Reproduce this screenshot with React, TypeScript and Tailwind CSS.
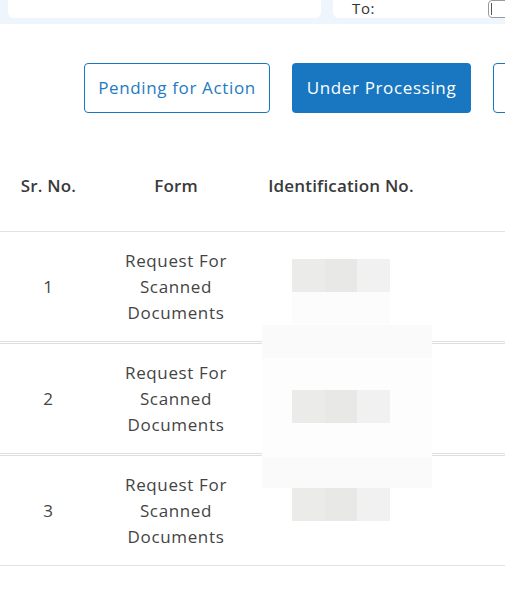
const rows = [
  { n: 1, offset: "pt-[27px]", under: true },
  { n: 2, offset: "pt-[46px]", under: false },
  { n: 3, offset: "pt-[32px]", under: false },
];

function BlurCell({ under, offset }: { under: boolean; offset: string }) {
  return (
    <div className={`relative z-10 flex flex-col items-center pl-[10px] ${offset}`}>
      <div className="flex h-[33px] w-[98px]">
        <div className="flex-1 bg-[#ebebea]" />
        <div className="flex-1 bg-[#e8e8e7]" />
        <div className="flex-1 bg-[#f1f1f1]" />
      </div>
      {under ? <div className="h-[32px] w-[98px] bg-[#fcfcfc]" /> : null}
    </div>
  );
}

export default function App() {
  return (
    <div className="relative h-[592px] w-[505px] overflow-hidden bg-white font-['Open_Sans',sans-serif] tracking-[0.04em]">
      <div className="flex h-[24px] gap-3 bg-[#eff5fc] px-2">
        <div className="h-[18px] w-[313px] rounded-b-md bg-white" />
        <div className="relative flex h-[18px] flex-1 items-end rounded-bl-md bg-white pl-[19px]">
          <span className="mb-[3px] text-[15px] leading-[14px] text-[#333]">To:</span>
          <div className="absolute right-[-12px] top-0 h-[18px] w-[21px] rounded-sm border border-[#9a9a9a] bg-white pl-[2px] pt-[2px]">
            <div className="h-[12px] w-[1px] bg-[#555]" />
          </div>
        </div>
      </div>

      <div className="mt-[39px] flex gap-[22px] pl-[84px]">
        <button className="h-[50px] w-[186px] shrink-0 rounded border border-[#1877c0] bg-white text-[17px] text-[#1f7bc2]">
          Pending for Action
        </button>
        <button className="h-[50px] w-[179px] shrink-0 rounded bg-[#1877c0] text-[17px] font-medium text-white">
          Under Processing
        </button>
        <button className="h-[50px] w-[120px] shrink-0 rounded border border-[#1877c0] bg-white" />
      </div>

      <div className="mt-[27px] w-[640px]">
        <div className="flex h-[92px] items-center border-b border-[#e2e2e2] text-[17px] font-semibold tracking-[0.01em] text-[#3a3a3a]">
          <div className="w-[97px] text-center">Sr. No.</div>
          <div className="w-[158px] text-center">Form</div>
          <div className="w-[172px] text-center">Identification No.</div>
        </div>
        {rows.map((row, i) => (
          <div
            key={row.n}
            className={
              i < rows.length - 1
                ? "flex h-[112px] border-b-[3px] border-double border-[#dedede] text-[17px] text-[#444]"
                : "flex h-[110px] border-b border-[#e2e2e2] text-[17px] text-[#444]"
            }
          >
            <div className="flex w-[97px] items-center justify-center">{row.n}</div>
            <div className="flex w-[158px] items-center justify-center text-center leading-[26px]">
              <div>
                Request For
                <br />
                Scanned
                <br />
                Documents
              </div>
            </div>
            <div className="w-[162px]">
              <BlurCell under={row.under} offset={row.offset} />
            </div>
          </div>
        ))}
      </div>

      {/* redaction smear over the id column */}
      <div className="absolute left-[262px] top-[325px] flex w-[170px] flex-col">
        <div className="h-[33px] bg-[#fafafa]" />
        <div className="h-[99px] bg-[#fdfdfd]" />
        <div className="h-[31px] bg-[#fafafa]" />
      </div>
    </div>
  );
}
